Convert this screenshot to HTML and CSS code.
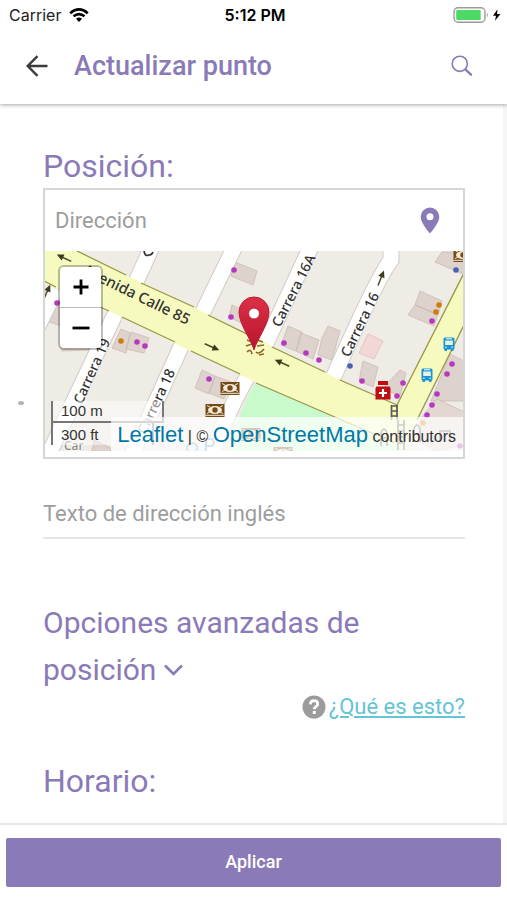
FILE: index.html
```html
<!DOCTYPE html>
<html lang="es">
<head>
<meta charset="utf-8">
<meta name="viewport" content="width=device-width, initial-scale=1">
<title>Actualizar punto</title>
<link rel="stylesheet" href="styles.css">
</head>
<body>
<header class="top">
  <div class="status">
    <div class="status-left">
      <span>Carrier</span>
      <svg width="20" height="14" viewBox="0 0 20 14" fill="none" stroke="#000" stroke-width="2.6" aria-hidden="true"><path d="M1.2 5.2Q10-2.4 18.8 5.2M4.5 8.3Q10 3.8 15.5 8.3"/><path d="M7 10.7Q10 8.4 13 10.7L10 14Z" fill="#000" stroke="none"/></svg>
    </div>
    <span class="clock">5:12 PM</span>
    <div class="status-right">
      <svg width="48" height="16" viewBox="0 0 48 16" aria-hidden="true"><rect x="1" y=".8" width="31" height="14.4" rx="4" fill="#fff" stroke="#9b9b9b" stroke-width="1.4"/><rect x="3.2" y="3" width="24.5" height="10" rx="1" fill="#4cd964"/><path d="M33.8 5.5q2 2.5 0 5z" fill="#9b9b9b"/><path d="M44.5 2.200 40 8.800h3l-1 5L47.500 7h-3.500z" fill="#000"/></svg>
    </div>
  </div>
  <div class="bar">
    <button class="icon-btn" aria-label="Volver"><svg width="22" height="22" viewBox="0 0 22 22" fill="none" stroke="#3c3c3c" stroke-width="2.4"><path d="M21.500 11H2M11.500 1.200 1.700 11l9.800 9.800"/></svg></button>
    <h1>Actualizar punto</h1>
    <button class="icon-btn search" aria-label="Buscar"><svg width="22" height="22" viewBox="0 0 22 22" fill="none" stroke="#8a7ab8"><circle cx="8.800" cy="8.800" r="7.600" stroke-width="1.600"/><path d="m14.500 14.500 5.500 5.200" stroke-width="2.400" stroke-linecap="round"/></svg></button>
  </div>
</header>

<main class="content">
  <i class="speck"></i>
  <h2>Posición:</h2>
  <section class="map-card">
    <div class="address">
      <input type="text" placeholder="Dirección" aria-label="Dirección">
      <button class="icon-btn" aria-label="Mi ubicación"><svg width="20" height="27" viewBox="0 0 20 27"><path fill="#8a7ab8" fill-rule="evenodd" d="M10 .5A9.300 9.300 0 0 0 .7 9.800C.7 16.500 10 26.500 10 26.500S19.300 16.500 19.300 9.800A9.300 9.300 0 0 0 10 .5ZM10 6.300a3.500 3.500 0 1 1 0 7 3.500 3.500 0 0 1 0-7Z"/></svg></button>
    </div>
    <div class="map">
      <svg class="tiles" viewBox="44 251 420 200" preserveAspectRatio="xMidYMid slice" role="img" aria-label="Mapa de Avenida Calle 85">
        <defs>
          <linearGradient id="pin" x1="0" y1="0" x2="0" y2="1"><stop offset="0" stop-color="#dc3048"/><stop offset="1" stop-color="#b8142c"/></linearGradient>
          <g id="bank"><rect x="-9.500" y="-6" width="19" height="13" fill="#744b16"/><path d="M-9.500 5.300h19" stroke="#f3ead8" stroke-width="1"/><ellipse rx="7" ry="4" fill="#f3ead8"/><circle r="2.700" fill="#744b16"/><path d="M-8-4.500l3 1.500M8-4.500l-3 1.500M-8 3.500l3-1.500M8 3.500l-3-1.500" stroke="#f3ead8"/></g>
          <g id="bus" fill="#1a94d4"><rect x="-5.500" y="-6.500" width="11" height="12" rx="1.500"/><rect x="-4.500" y="5" width="2.500" height="2"/><rect x="2" y="5" width="2.500" height="2"/><rect x="-3.800" y="-3.500" width="7.600" height="4.500" fill="#e6f3e0"/><path d="M-3-5.200h6M-4 3.200h1.700M2.300 3.200H4" stroke="#fff" stroke-width="1"/></g>
          <g id="arrow"><path d="M-8 0H3" stroke="#4c4a26" stroke-width="1.500"/><path d="M8 0 1-3.300v6.600z" fill="#3d3b1d"/></g>
        </defs>
        <rect x="44" y="251" width="420" height="200" fill="#efebe5"/>
        <path d="M255 383 395 443 405 451H228Q236 420 255 383Z" fill="#c8facc"/>
        <g fill="#ddd3cc" stroke="#c9bbb2" stroke-width=".8">
          <path d="M44 315l7-18 10 5v24l-17-6zM121 329l9 4-4 20-14-5zM131 332l18 6-5 15-18-4zM235 262l22 9-4 14-22-9zM232 305l13 6-4 12-12-6zM288 326l14 6-6 19-15-6zM301 333l18 7-6 19-17-8zM322 338l6-12 12 5-8 29-14-5zM202 370l13 6-6 18-14-6zM215 376l16 6-7 17-15-6zM420 291l22 10-4 14-23-10zM415 305l23 9-4 12-26-11zM442 252h22l-1 22-28-12zM363 361l15 6-5 20-14-6zM400 370l6 3-6 23-12-5-4-4zM450 354l14 7v40l-33 0z"/>
          <path d="M421 418l16-19 27 13v33l-28 6-18-10z" fill="#e2d8d1"/>
          <path d="M368 334l15 7-9 18-15-6z" fill="#f1d8d6" stroke="#e4bcb8"/>
          <path d="M60 345l26-2 4 7-28 1zM94 440l17 8-1 4-18-1z"/>
        </g>
        <g fill="none" stroke="#d0cbc6" stroke-width="17"><path d="M155 240 130 295M240 236 198 322M118 308 46 460M184 340 132 455M250 372Q228 410 210 458M314 240 262 352M391 240v20Q376 280 330 385"/><path d="M56 289 38 326"/></g>
        <g fill="none" stroke="#fff" stroke-width="15"><path d="M155 240 130 295M240 236 198 322M118 308 46 460M184 340 132 455M250 372Q228 410 210 458M314 240 262 352M391 240v20Q376 280 330 385"/><path d="M56 289 38 326"/></g>
        <path d="M40 251H77L140 282 195 308 272 346 340 380 397 405 466 270V323L417 420 405 451 320 410 255 382 188 350 122 317 40 281Z" fill="#f6fabf"/>
        <g fill="none" stroke="#989743" stroke-width="1.300"><path d="M77 251l49 24M141 283l53 24M208 315l49 24M272 347l53 25M340 380l57 25 67-132M464 325l-47 95M44 281l12 6M65 291l44 20M122 317l53 25M191 351l49 23M256 383 395 443"/></g>
        <g class="street">
          <text class="avenue" transform="translate(187 325) rotate(26)" text-anchor="end">Avenida Calle 85</text>
          <text transform="translate(280 328) rotate(-63)">Carrera 16A</text>
          <text transform="translate(349 358) rotate(-64)">Carrera 16</text>
          <text transform="translate(82 405) rotate(-66)">Carrera 19</text>
          <text transform="translate(146 435) rotate(-65)">Carrera 18</text>
          <text class="faint" x="64" y="450">Car</text>
        </g>
        <path d="M144 251q1 6 5 4 3 0 4-3" fill="none" stroke="#333" stroke-width="1.700"/>
        <use href="#arrow" transform="translate(64 258) rotate(205)"/>
        <use href="#arrow" transform="translate(212 347) rotate(24)"/>
        <use href="#arrow" transform="translate(282 363) rotate(204)"/>
        <use href="#arrow" transform="translate(381 278) rotate(-68)"/>
        <use href="#arrow" transform="translate(47 292) rotate(-66)"/>
        <g fill="#b638c0"><circle cx="57" cy="303" r="2.800"/><circle cx="137" cy="342" r="2.800"/><circle cx="145" cy="346" r="2.800"/><circle cx="234" cy="270" r="2.800"/><circle cx="231" cy="317" r="2.800"/><circle cx="284" cy="343" r="2.800"/><circle cx="306" cy="353" r="2.800"/><circle cx="319" cy="360" r="2.800"/><circle cx="209" cy="379" r="2.800"/><circle cx="432" cy="321" r="2.800"/><circle cx="362" cy="381" r="2.800"/><circle cx="403" cy="383" r="2.800"/><circle cx="397" cy="396" r="2.800"/><circle cx="452" cy="364" r="2.800"/><circle cx="447" cy="374" r="2.800"/><circle cx="437" cy="394" r="2.800"/><circle cx="432" cy="405" r="2.800"/><circle cx="427" cy="415" r="2.800"/><circle cx="460" cy="446" r="2.800"/></g>
        <g fill="#d07c0c"><circle cx="121" cy="341" r="2.800"/><circle cx="439" cy="305" r="2.800"/><circle cx="436" cy="312" r="2.800"/><circle cx="423" cy="423" r="2.800"/></g>
        <g fill="#4763ad"><circle cx="456" cy="270" r="2.800"/><circle cx="350" cy="366" r="2.800"/></g>
        <use href="#bank" x="230" y="388"/><use href="#bank" x="215" y="410"/><use href="#bank" x="251" y="434"/><use href="#bank" x="283" y="453"/><use href="#bank" x="463" y="255"/>
        <use href="#bus" x="449" y="344"/><use href="#bus" x="427" y="375"/>
        <path d="M378 381h10v4h-10zM376.500 386.500h13q1 1 1 2v11h-15v-11q0-1 1-2z" fill="#bf0d14"/><path d="M383 389v8M379 393h8" stroke="#fff" stroke-width="2.200"/>
        <g fill="none" stroke="#5c5a56" stroke-width="1.700"><path d="M391.500 405v15M397 405v15M391 406h7M391 411h7M391 416h7M398 420v30M404 420v30M397 425h8M397 431h8M397 437h8M397 443h8M381 446v-13q3-8 6 0v13M381 438h6M414 442v-13q3-8 6 0v13M414 434h6M440 440v-9h10v9"/></g>
        <g fill="none" stroke="#62a8d8" stroke-width="2"><circle cx="192" cy="448" r="5"/><path d="M206 452v-13h6q4 4 0 7h-5"/></g>
        <g fill="none" stroke="#91642a" stroke-width="1.700"><path d="M247 340l5 2M246 346l6-2M247 352q4-4 5 2M257 340l6 2M257 346l7-1M256 352q3 3 8-3M259 355l5-1"/></g>
        <path d="M254 350C251 339 239 324 239 312A15 15 0 0 1 269 312C269 324 257 339 254 350Z" fill="url(#pin)" stroke="#bd1c34" stroke-width="1"/>
        <circle cx="254" cy="313.500" r="5.300" fill="#fff" stroke="#a31b2f" stroke-width=".6"/>
      </svg>
      <div class="zoom">
        <button aria-label="Acercar"><svg width="16" height="16" viewBox="0 0 16 16"><path d="M8 .5v15M.5 8h15" stroke="#000" stroke-width="2.800"/></svg></button>
        <button aria-label="Alejar"><svg width="18" height="16" viewBox="0 0 18 16"><path d="M.5 8h17" stroke="#000" stroke-width="2.800"/></svg></button>
      </div>
      <div class="scale">
        <div class="metric">100 m</div>
        <div class="imperial">300 ft</div>
      </div>
      <div class="credit"><a href="#leaflet">Leaflet</a> | © <a href="#osm">OpenStreetMap</a> contributors</div>
    </div>
  </section>

  <input class="line-input" type="text" placeholder="Texto de dirección inglés" aria-label="Texto de dirección inglés">

  <h2 class="advanced"><button aria-expanded="false">Opciones avanzadas de posición <svg width="19" height="13" viewBox="0 0 19 13" fill="none" stroke="#8a7ab8" stroke-width="2.600"><path d="m1 1.500 8.500 8.500L18 1.500"/></svg></button></h2>
  <div class="help">
    <svg width="24" height="24" viewBox="0 0 24 24" aria-hidden="true"><circle cx="12" cy="12" r="11.500" fill="#9b9b9b"/><path d="M8.300 9.300q.2-3.600 3.800-3.600 3.600.1 3.600 3.200 0 1.700-1.900 2.900-1.600 1-1.600 2.500" fill="none" stroke="#fff" stroke-width="2.800"/><rect x="10.800" y="16" width="3" height="3" fill="#fff"/></svg>
    <a href="#ayuda">¿Qué es esto?</a>
  </div>

  <h2 class="hours">Horario:</h2>
</main>

<footer class="actions"><button>Aplicar</button></footer>
</body>
</html>
```

FILE: styles.css
```css
* { box-sizing: border-box; }
body {
  margin: 0;
  min-height: 100vh;
  display: flex;
  flex-direction: column;
  background: #fff;
  font-family: Roboto, sans-serif;
  color: #8a7ab8;
}
h1, h2 { margin: 0; }
button { font: inherit; color: inherit; border: 0; padding: 0; background: none; }
input { font: inherit; border: 0; padding: 0; background: none; outline: none; min-width: 0; border-radius: 0; color: #555; }
input::placeholder { color: #9d9d9d; opacity: 1; }
svg { display: block; }

.top { position: relative; z-index: 1; height: 104px; box-shadow: 0 1px 4px rgba(0, 0, 0, .35); background: #fff; }
.status {
  display: grid;
  grid-template-columns: 1fr auto 1fr;
  align-items: center;
  height: 30px;
  padding: 0 6px 0 9px;
  font: 16px/30px Inter, sans-serif;
  color: #222;
}
.status-left { display: flex; align-items: center; gap: 8px; }
.status-right { display: flex; justify-content: flex-end; }
.clock { font-weight: 600; color: #000; }
.bar { display: flex; align-items: center; height: 72px; padding: 0 34px 0 26px; }
.bar h1 { flex: 1; margin-left: 26px; font-size: 27px; font-weight: 500; line-height: 32px; }
.icon-btn { flex: none; }

.content { position: relative; flex: 1; padding: 42px 38px 0 43px; border-right: 4px solid #f5f5f5; }
.speck { position: absolute; left: 18px; top: 297px; width: 6px; height: 4px; border-radius: 50%; background: #b4b4b4; }
h2 { font-size: 32px; font-weight: 400; line-height: 40px; }

.map-card { border: 2px solid #d6d6d6; padding-bottom: 6px; margin-top: 2px; }
.address { display: flex; align-items: center; height: 61px; padding: 0 23px 0 10px; }
.address input { flex: 1; font-size: 22px; line-height: 28px; }
.map { position: relative; height: 200px; overflow: hidden; }
.tiles { width: 100%; height: 100%; }
.street { font: 500 14px "Noto Sans", sans-serif; fill: #333; stroke: #fff; stroke-opacity: .5; stroke-width: 2px; paint-order: stroke; }
.avenue { font-size: 15px; stroke: none; }
.faint { font-size: 12px; fill: #888; }

.zoom { position: absolute; left: 13px; top: 14px; border: 2px solid rgba(0, 0, 0, .25); border-radius: 6px; background-clip: padding-box; }
.zoom button { display: flex; align-items: center; justify-content: center; width: 41px; height: 40px; background: #fff; }
.zoom button:first-child { height: 41px; border-bottom: 1px solid #bbb; border-radius: 4px 4px 0 0; }
.zoom button:last-child { border-radius: 0 0 4px 4px; }
.scale { position: absolute; left: 6px; bottom: 6px; color: #333; font: 15px/20px "Liberation Sans", sans-serif; }
.scale div { padding-left: 8px; border: 2px solid #777; background: rgba(255, 255, 255, .5); }
.scale .metric { width: 113px; height: 22px; border-top: 0; }
.scale .imperial { width: 103px; height: 24px; border-bottom: 0; margin-top: -2px; padding-top: 2px; }
.credit {
  position: absolute;
  right: 0;
  bottom: 0;
  padding: 4px 7px 0 6px;
  background: rgba(255, 255, 255, .7);
  color: #333;
  font: 16px/28px "Liberation Sans", sans-serif;
  white-space: nowrap;
}
.credit a { color: #0078a8; font-size: 22px; text-decoration: none; }

.line-input { display: block; width: 100%; height: 49px; margin-top: 31px; border-bottom: 2px solid #e6e6e6; font-size: 22px; }
.advanced { margin-top: 60px; font-size: 30px; line-height: 47px; }
.advanced button { display: block; width: 100%; text-align: left; }
.advanced svg { display: inline-block; vertical-align: 3px; }
.help { display: flex; justify-content: flex-end; align-items: center; gap: 3px; height: 28px; }
.help a { color: #64c4d4; font-size: 22px; line-height: 28px; }
.hours { margin-top: 40px; }

.actions { padding: 13px 6px; border-top: 2px solid #e8e8e8; background: #fff; }
.actions button { display: block; width: 100%; height: 49px; padding-bottom: 2px; border-radius: 2px; background: #8a7ab8; color: #fff; font-size: 18px; font-weight: 500; }
```
